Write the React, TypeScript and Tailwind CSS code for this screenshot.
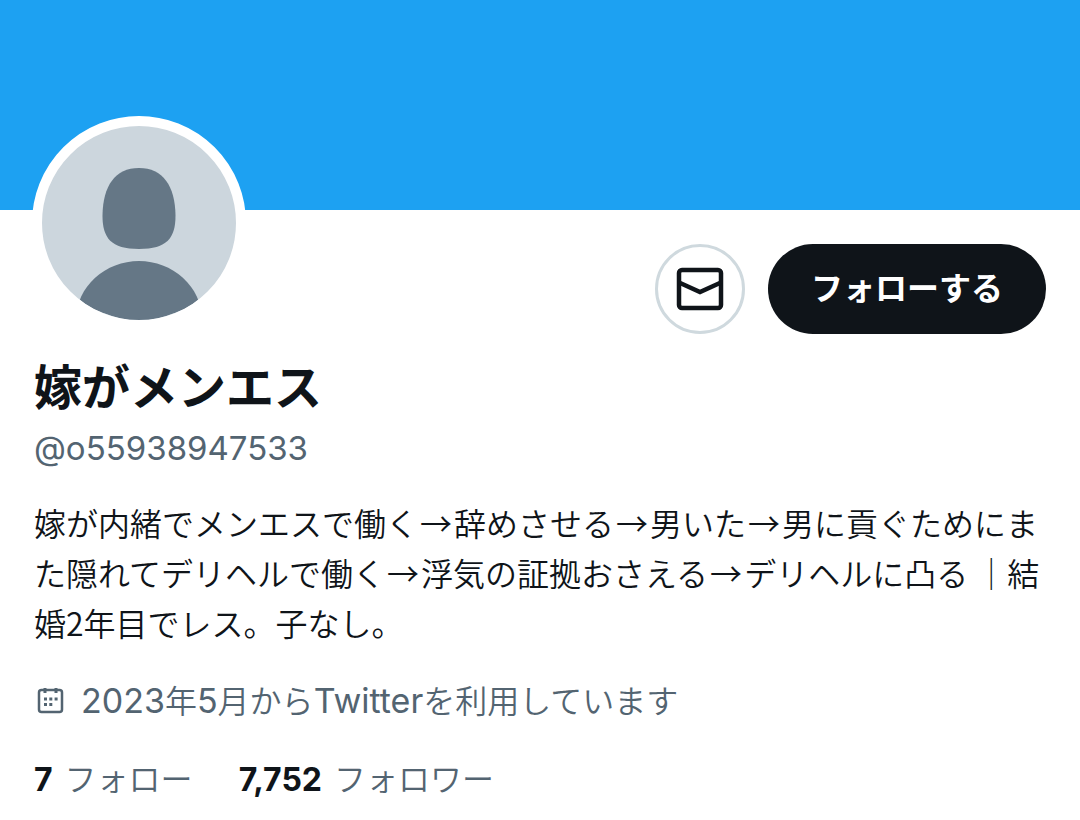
import React from "react";

const stats = [
  { value: "7", label: "フォロー" },
  { value: "7,752", label: "フォロワー" },
];

function Avatar() {
  return (
    <div className="h-[214px] w-[214px] shrink-0 overflow-hidden rounded-full border-[10px] border-white bg-[#ccd6dd]">
      <svg viewBox="0 0 194 194" className="h-full w-full rounded-full" aria-hidden="true">
        <path
          fill="#657786"
          d="M97 42C73 42 61 60 60.500 89C60.300 112 69 123 97 123C125 123 133.700 112 133.500 89C133 60 121 42 97 42Z"
        />
        <path
          fill="#657786"
          d="M34 194C34 160 64 135 97 135C130 135 160 160 160 194Z"
        />
      </svg>
    </div>
  );
}

function MessageIcon() {
  return (
    <svg
      viewBox="0 0 48 44"
      className="h-[44px] w-[48px]"
      fill="none"
      stroke="#0f1419"
      strokeWidth="4.500"
      aria-hidden="true"
    >
      <rect x="3" y="3" width="42" height="38" rx="3" />
      <path d="M3 15.500L24 25L45 15.500" />
    </svg>
  );
}

function CalendarIcon() {
  return (
    <svg viewBox="0 0 28 28" className="h-7 w-7" fill="none" aria-hidden="true">
      <rect x="3" y="2" width="23" height="22" rx="2.500" stroke="#536471" strokeWidth="2.500" />
      <path d="M9 0V5M20 0V5" stroke="#536471" strokeWidth="3" />
      <path
        d="M8 9.500h3v3H8zM13.300 9.500h3v3h-3zM18.600 9.500h3v3h-3zM8 15h3v3H8zM13.300 15h3v3h-3z"
        fill="#536471"
      />
    </svg>
  );
}

function Arrow() {
  return <span className="mx-0.5">→</span>;
}

function Latin({ children }: { children: React.ReactNode }) {
  return <span className="text-[34px] font-normal">{children}</span>;
}

export default function App() {
  return (
    <main
      lang="ja"
      className="min-h-screen bg-white pb-4 font-['Inter','Noto_Sans_CJK_JP',sans-serif] text-[#0f1419]"
    >
      <div className="h-[210px] bg-[#1da1f2]" />

      <div className="-mt-[94px] flex justify-between pr-[34px] pl-8">
        <Avatar />
        <div className="flex items-center gap-[23px] self-start pt-32">
          <button
            type="button"
            aria-label="メッセージ"
            className="flex h-[90px] w-[90px] items-center justify-center rounded-full border-[3px] border-[#cfd9de] bg-white"
          >
            <MessageIcon />
          </button>
          <button
            type="button"
            className="h-[90px] rounded-full bg-[#0f1419] px-[43px] text-[32px] font-bold text-white"
          >
            フォローする
          </button>
        </div>
      </div>

      <div className="px-[34px] pt-5">
        <h1 className="text-[48px] leading-[68px] font-bold">嫁がメンエス</h1>
        <p className="pt-0.5 text-[33px] leading-[48px] text-[#536471]">@o55938947533</p>

        <p className="mt-[25px] font-['Noto_Sans_CJK_JP',sans-serif] text-[32px] leading-[50px] font-[350]">
          嫁が内緒でメンエスで働く
          <Arrow />
          辞めさせる
          <Arrow />
          男いた
          <Arrow />
          男に貢ぐためにまた隠れてデリヘルで働く
          <Arrow />
          浮気の証拠おさえる
          <Arrow />
          デリヘルに凸る ｜結婚2年目でレス。子なし。
        </p>

        <div className="mt-[30px] flex items-center gap-[17px] pl-0.5 text-[32px] leading-[48px] font-[350] text-[#536471]">
          <CalendarIcon />
          <span>
            <Latin>2023</Latin>年<Latin>5</Latin>月から<Latin>Twitter</Latin>
            を利用しています
          </span>
        </div>

        <div className="mt-[30px] flex gap-[46px] text-[32px] leading-[48px] font-[350]">
          {stats.map((s) => (
            <a key={s.label} href="#" className="flex gap-3 text-[#536471]">
              <span className="font-bold text-[#0f1419]">{s.value}</span>
              {s.label}
            </a>
          ))}
        </div>
      </div>
    </main>
  );
}
